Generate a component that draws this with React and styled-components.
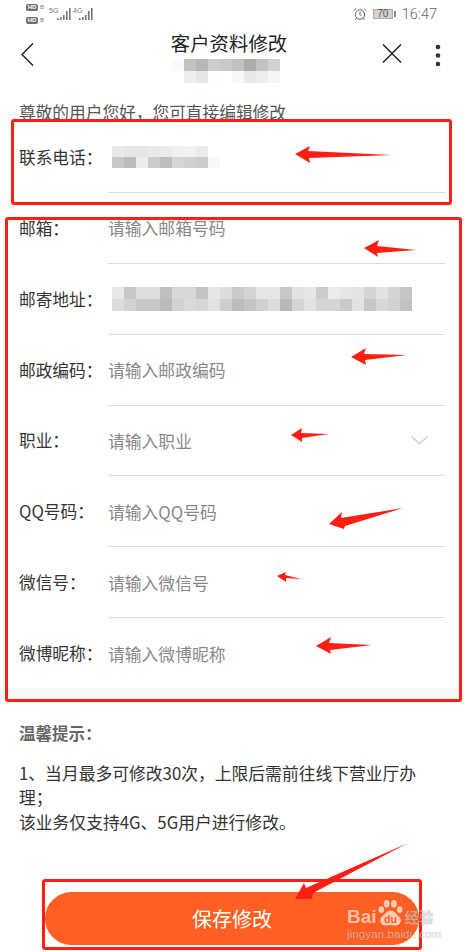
import React from "react";
import styled, { createGlobalStyle } from "styled-components";
import { AlarmClock } from "lucide-react";

const GlobalStyle = createGlobalStyle`
html, body {
    margin: 0;
    padding: 0;
    background: #fff;
}
* {
    box-sizing: border-box;
}
body {
    font-family: "Noto Sans CJK SC", "Noto Sans", sans-serif;
}
`

const Page = styled.div`
width: 464px;
height: 952px;
position: relative;
overflow: hidden;
background: #fff;
color: #333;
`

const StatusBar = styled.div`
height: 30px;
padding: 4px 27px 0 26px;
display: flex;
justify-content: space-between;
align-items: flex-start;
`
const StatusGroup = styled.div`
display: flex;
align-items: flex-start;
`
const SimColumn = styled.div`
display: flex;
flex-direction: column;
gap: 6px;
margin-right: 5px;
`
const Sim = styled.div`
display: flex;
align-items: center;
gap: 2px;
height: 7px;
font: 6px/7px "Liberation Sans", sans-serif;
color: #777;
`
const HdPill = styled.span`
width: 12px;
height: 7px;
border-radius: 2px;
background: #6f6f6f;
color: #fff;
font: bold 6px/7px "Liberation Sans", sans-serif;
text-align: center;
`
const Signal = styled.div`
position: relative;
width: ${props => props.$width}px;
height: 20px;
margin-right: ${props => props.$gap}px;
font: 7px/7px "Liberation Sans", sans-serif;
color: #777;
padding-top: 3px;
`
const Clock = styled.span`
font: 300 14.5px/20px Roboto, sans-serif;
color: #666;
margin: 0 0 0 6px;
position: relative;
top: 1px;
`
const Battery = styled.div`
width: 20px;
height: 10px;
margin: 5px 0 0 6px;
border: 1px solid #aaa;
background: #d2d2d2;
color: #555;
font: 10px/8px "Liberation Sans", sans-serif;
text-align: center;
`
const BatteryNub = styled.span`
width: 2px;
height: 6px;
margin: 7px 0 0 1px;
background: #888;
`

const NavBar = styled.div`
height: 62px;
display: grid;
grid-template-columns: 171px 116px 1fr;
`
const NavLeft = styled.div`
padding: 13px 0 0 21px;
`
const NavCenter = styled.div`
display: flex;
flex-direction: column;
align-items: center;
`
const NavTitle = styled.h1`
margin: 0;
height: 29px;
font-size: 19.4px;
font-weight: 400;
line-height: 25px;
color: #222;
white-space: nowrap;
`
const NavRight = styled.div`
display: flex;
justify-content: flex-end;
gap: 33px;
padding: 14px 23px 0 0;
`

const Intro = styled.p`
margin: 0;
height: 29px;
padding: 8px 19px 0;
font-size: 16.7px;
line-height: 24px;
color: #555;
white-space: nowrap;
`

const Row = styled.div`
height: 70.85px;
padding: 0 19px;
display: grid;
grid-template-columns: 89px 1fr;
`
const Label = styled.span`
padding-top: ${props => props.$nudge}px;
font-size: 16.7px;
line-height: 71px;
color: #333;
white-space: nowrap;
`
const Field = styled.div`
display: flex;
align-items: center;
justify-content: space-between;
padding: ${props => props.$nudge}px 17px 0 0;
border-bottom: ${props => props.$last ? "none" : "1px solid #dcdcdc"};
`
const Placeholder = styled.span`
font-size: 16.8px;
line-height: 24px;
color: #888;
white-space: nowrap;
`
const MosaicGrid = styled.div`
display: grid;
grid-template-columns: repeat(${props => props.$cols}, 12px);
grid-auto-rows: ${props => props.$rowHeight}px;
margin-left: ${props => props.$offset}px;
`

const Strip = styled.div`
height: 12px;
background: #f7f7f7;
`

const Tips = styled.section`
padding: 21px 19px 0;
`
const TipsTitle = styled.h2`
margin: 0 0 16px;
font-size: 16.5px;
font-weight: 700;
line-height: 24px;
color: #666;
`
const TipsText = styled.p`
margin: 0;
font-size: 16.8px;
line-height: 24.5px;
color: #333;
`

const SaveButton = styled.button`
display: block;
width: 374px;
height: 53px;
margin: 58px 0 0 45px;
border: none;
border-radius: 27px;
background: #ff5f22;
color: #fff;
font-family: inherit;
font-size: 20px;
line-height: 53px;
padding: 0;
`

const RedBox = styled.div`
position: absolute;
left: ${props => props.$x}px;
top: ${props => props.$y}px;
width: ${props => props.$w}px;
height: ${props => props.$h}px;
border: 3px solid #ff1f12;
border-radius: 3px;
`
const ArrowLayer = styled.svg`
position: absolute;
left: 0;
top: 0;
`

const Watermark = styled.div`
position: absolute;
left: 347px;
top: 899px;
width: 96px;
`
const WatermarkTop = styled.div`
display: flex;
align-items: flex-end;
height: 28px;
`
const BaiText = styled.span`
font: bold 19px/20px "Liberation Sans", sans-serif;
color: rgba(255, 255, 255, 0.62);
`
const JingText = styled.span`
margin-left: 1px;
font-size: 14.5px;
font-weight: 700;
line-height: 21px;
color: rgba(255, 255, 255, 0.5);
text-shadow: 0 0 1px rgba(0, 0, 0, 0.3);
`
const Domain = styled.div`
margin-top: 1px;
font: 11.5px/13px "Liberation Sans", sans-serif;
letter-spacing: 0.1px;
color: rgba(255, 255, 255, 0.58);
text-shadow: 0 0 1px rgba(0, 0, 0, 0.3);
white-space: nowrap;
`

const titleCells = [
    "#fafafa", "#c2c2c2", "#b6b6b6", "#cdcdcd", "#c9c9c9", "#c1c1c1", "#acacac", "#c2c2c2", "#d2d2d2",
    "#ffffff", "#eeeeee", "#e6e6e6", "#fefefe", "#ffffff", "#f8f8f8", "#e8e8e8", "#eeeeee", "#f6f6f6",
];
const phoneCells = [
    "#e9e9e9", "#e6e6e6", "#e6e6e6", "#e9e9e9", "#ebebeb", "#f1f1f1", "#f2f2f2", "#ebebeb", "#ffffff",
    "#c8c8c8", "#bbbbbb", "#ececec", "#cbcbcb", "#bebebe", "#d6d6d6", "#d0d0d0", "#cccccc", "#f8f8f8",
];
const addressCells = [
    "#e8e8e8", "#c8c8c8", "#dddddd", "#dddddd", "#c0c0c0", "#d8d8d8", "#d8d8d8", "#c4c4c4", "#e6e6e6", "#dcdcdc", "#cacaca", "#d4d4d4", "#e6e6e6",
    "#e6e6e6", "#c8c8c8", "#e2e2e2", "#e6e6e6", "#cccccc", "#ececec", "#e6e6e6", "#e4e4e4", "#d4d4d4", "#e2e2e2", "#d4d4d4", "#c6c6c6",
    "#dcdcdc", "#d2d2d2", "#c8c8c8", "#c8c8c8", "#bbbbbb", "#d2d2d2", "#dadada", "#d6d6d6", "#e2e2e2", "#cecece", "#bcbcbc", "#c4c4c4", "#d0d0d0",
    "#dcdcdc", "#b8b8b8", "#d4d4d4", "#e2e2e2", "#d4d4d4", "#d4d4d4", "#cacaca", "#e2e2e2", "#c6c6c6", "#d8d8d8", "#d2d2d2", "#c2c2c2",
];

const arrows = [
    "295,154 310,146 308,151 392,155 309,158 310,163",
    "364,248 379,240 377,246 416,250 377,253 378,257",
    "351,357 366,348 364,354 407,355 365,360 366,365",
    "291,435 302,428 301,433 329,434 302,438 302,442",
    "329,524 342,512 341,518 403,508 345,526 344,529",
    "277,576 286,572 285,575 301,579 286,578 286,582",
    "316,646 331,637 329,643 372,645 330,650 331,654",
    "295,899 304,883 306,888 408,843 313,893 312,899",
];

const rows = [
    { label: "邮箱：", placeholder: "请输入邮箱号码" },
    { label: "邮寄地址：", mosaic: addressCells },
    { label: "邮政编码：", placeholder: "请输入邮政编码" },
    { label: "职业：", placeholder: "请输入职业", select: true },
    { label: "QQ号码：", placeholder: "请输入QQ号码" },
    { label: "微信号：", placeholder: "请输入微信号" },
    { label: "微博昵称：", placeholder: "请输入微博昵称", last: true },
];

const Mosaic = ({ cells, cols, rowHeight, offset = 0 }) => (
    <MosaicGrid $cols={cols} $rowHeight={rowHeight} $offset={offset}>
        {cells.map((color, i) => <span key={i} style={{ background: color }} />)}
    </MosaicGrid>
)

const Bars = ({ left, top, heights }) => (
    <svg width={heights.length * 3} height="13" style={{ position: "absolute", left, top }}>
        {heights.map((h, i) => <rect key={i} x={i * 3} y={13 - h} width="1.6" height={h} fill="#777" />)}
    </svg>
)

const App = () => {
    return (
        <Page lang="zh-CN">
            <GlobalStyle />
            <StatusBar>
                <StatusGroup>
                    <SimColumn>
                        <Sim><HdPill>HD</HdPill>B</Sim>
                        <Sim><HdPill>HD</HdPill>B</Sim>
                    </SimColumn>
                    <Signal $width={20} $gap={4}>
                        5G
                        <Bars left={8} top={3} heights={[2, 3, 5, 9, 12]} />
                    </Signal>
                    <Signal $width={20} $gap={0}>
                        4G
                        <Bars left={6} top={3} heights={[2, 3, 5, 9, 12]} />
                    </Signal>
                </StatusGroup>
                <StatusGroup>
                    <AlarmClock size={14} color="#555" strokeWidth={1.6} style={{ marginTop: 3 }} />
                    <Battery>70</Battery>
                    <BatteryNub />
                    <Clock>16:47</Clock>
                </StatusGroup>
            </StatusBar>

            <NavBar>
                <NavLeft>
                    <svg width="13" height="23" viewBox="0 0 13 23">
                        <polyline points="12,0.5 1,11.5 12,22.5" fill="none" stroke="#222" strokeWidth="1.5" />
                    </svg>
                </NavLeft>
                <NavCenter>
                    <NavTitle>客户资料修改</NavTitle>
                    <Mosaic cells={titleCells} cols={9} rowHeight={12} offset={-6} />
                </NavCenter>
                <NavRight>
                    <svg width="20" height="20" viewBox="0 0 20 20">
                        <path d="M1 0.5 L19 18.5 M19 0.5 L1 18.5" stroke="#222" strokeWidth="1.5" fill="none" />
                    </svg>
                    <svg width="6" height="23" viewBox="0 0 6 23">
                        <circle cx="3" cy="3" r="2.3" fill="#333" />
                        <circle cx="3" cy="11.5" r="2.3" fill="#333" />
                        <circle cx="3" cy="20" r="2.3" fill="#333" />
                    </svg>
                </NavRight>
            </NavBar>

            <Intro>尊敬的用户您好，您可直接编辑修改</Intro>

            <Row>
                <Label $nudge={1}>联系电话：</Label>
                <Field $nudge={0}>
                    <Mosaic cells={phoneCells} cols={9} rowHeight={11} offset={4} />
                </Field>
            </Row>
            {rows.map(row => (
                <Row key={row.label}>
                    <Label $nudge={1}>{row.label}</Label>
                    <Field $nudge={2} $last={row.last}>
                        {row.mosaic
                            ? <Mosaic cells={row.mosaic} cols={25} rowHeight={12} offset={4} />
                            : <Placeholder>{row.placeholder}</Placeholder>}
                        {row.select && (
                            <svg width="17" height="9" viewBox="0 0 17 9">
                                <polyline points="0.5,0.5 8.5,8 16.5,0.5" fill="none" stroke="#ccc" strokeWidth="1.2" />
                            </svg>
                        )}
                    </Field>
                </Row>
            ))}
            <Strip />

            <Tips>
                <TipsTitle>温馨提示：</TipsTitle>
                <TipsText>
                    1、当月最多可修改30次，上限后需前往线下营业厅办理；<br />
                    该业务仅支持4G、5G用户进行修改。
                </TipsText>
            </Tips>

            <SaveButton>保存修改</SaveButton>

            <RedBox $x={11} $y={119} $w={441} $h={86} />
            <RedBox $x={5} $y={217} $w={457} $h={485} />
            <RedBox $x={42} $y={879} $w={380} $h={71} />
            <ArrowLayer width="464" height="952">
                {arrows.map(points => <polygon key={points} points={points} fill="#ff1f12" />)}
            </ArrowLayer>

            <Watermark>
                <WatermarkTop>
                    <BaiText>Bai</BaiText>
                    <svg width="27" height="28" viewBox="0 0 27 29">
                        <g fill="rgba(255,255,255,0.68)">
                            <ellipse cx="4" cy="11" rx="2.8" ry="3.6" />
                            <ellipse cx="9.5" cy="5" rx="3" ry="4" />
                            <ellipse cx="17" cy="5" rx="3" ry="4" />
                            <ellipse cx="23" cy="11" rx="2.8" ry="3.6" />
                            <path d="M13.5 12 C18 12 19 16 23 19 C26 23 23 28 18 27.5 C15 27 12 27 9 27.5 C4 28 1 23 4 19 C8 16 9 12 13.5 12 Z" />
                        </g>
                        <text x="13.5" y="25" textAnchor="middle" fontSize="11" fontWeight="700" fontFamily="Liberation Sans" fill="#ff5f22">du</text>
                    </svg>
                    <JingText>经验</JingText>
                </WatermarkTop>
                <Domain>jingyan.baidu.com</Domain>
            </Watermark>
        </Page>
    )
}

export default App;
